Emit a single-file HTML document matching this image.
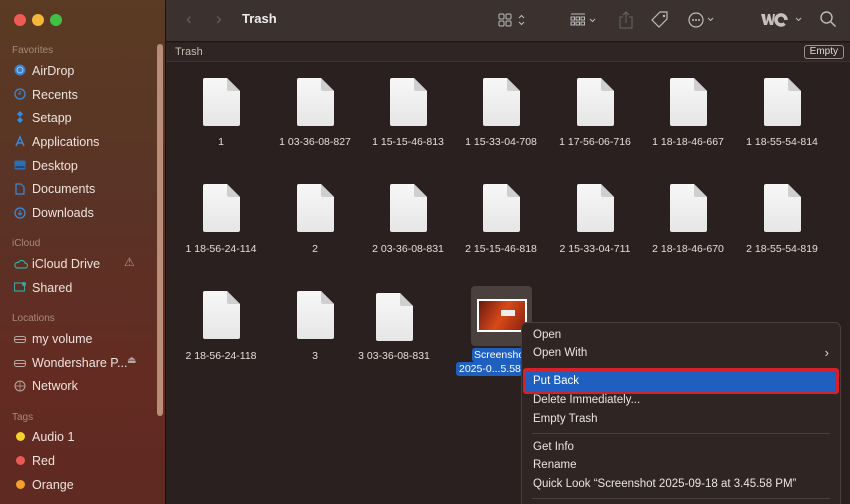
<!DOCTYPE html><html><head><style>
*{margin:0;padding:0;box-sizing:border-box}
html,body{width:850px;height:504px;overflow:hidden}
body{font-family:"Liberation Sans",sans-serif;background:#2a201f;position:relative}
.sb{position:absolute;left:0;top:0;width:166px;height:504px;background:linear-gradient(180deg,#5b3b24 0%,#5a3326 40%,#642b22 75%,#5e2a22 100%);border-right:1px solid #1a1210}
.dot{position:absolute;top:14px;width:12px;height:12px;border-radius:50%}
.sec{position:absolute;left:12px;font-size:10px;color:#a88a7a}
.it{position:absolute;left:32px;font-size:12.5px;color:#eee3dc}
.ic{position:absolute;left:14px;width:12px;height:12px}
.tb{position:absolute;left:166px;top:0;width:684px;height:42px;background:#3b3230;border-bottom:1px solid #1d1514}
.pb{position:absolute;left:166px;top:43px;width:684px;height:19px;background:#2e2524;border-bottom:1px solid #3c3230}
.f{position:absolute;width:37px;height:48px}
.lb{position:absolute;width:100px;text-align:center;font-size:10.5px;color:#e6dcd8}
.menu{position:absolute;left:521px;top:322px;width:320px;height:190px;background:#2f2624;border:1px solid #4a3f3c;border-radius:6px}
.mi{position:absolute;left:11px;font-size:11.5px;color:#ece4e0}
.sep{position:absolute;left:10px;right:10px;height:1px;background:#4a403d}
</style></head><body>
<svg width="0" height="0" style="position:absolute"><defs><linearGradient id="pg" x1="0" y1="0" x2="0" y2="1"><stop offset="0" stop-color="#f7f7f7"/><stop offset="1" stop-color="#e6e6e6"/></linearGradient><symbol id="doc" viewBox="0 0 37 48"><path d="M2 0h22l13 13v33a2 2 0 0 1-2 2H2a2 2 0 0 1-2-2V2a2 2 0 0 1 2-2z" fill="url(#pg)"/><path d="M24 0v11a2 2 0 0 0 2 2h11z" fill="#cfcfcf"/></symbol></defs></svg>
<div class="sb">
<div class="dot" style="left:14px;background:#ee5a55"></div>
<div class="dot" style="left:32px;background:#f3b73a"></div>
<div class="dot" style="left:50px;background:#3fc146"></div>
<div style="position:absolute;left:157px;top:44px;width:6px;height:372px;border-radius:3px;background:#b98d77"></div>
<div class="sec" style="top:45px">Favorites</div>
<svg class="ic" style="top:64px" viewBox="0 0 12 12"><circle cx="6" cy="6" r="5.5" fill="#3a7fc8"/><circle cx="6" cy="6" r="3" fill="none" stroke="#9cc8f0" stroke-width="1"/></svg><div class="it" style="top:64px">AirDrop</div>
<svg class="ic" style="top:88px" viewBox="0 0 12 12"><circle cx="6" cy="6" r="5" fill="none" stroke="#3a8ad8" stroke-width="1.3"/><path d="M6 3v3H4" stroke="#3a8ad8" fill="none"/></svg><div class="it" style="top:88px">Recents</div>
<svg class="ic" style="top:111px" viewBox="0 0 12 12"><path d="M6 0l3 3-3 3-3-3zM6 6l3 3-3 3-3-3z" fill="#2f8ee8"/></svg><div class="it" style="top:111px">Setapp</div>
<svg class="ic" style="top:135px" viewBox="0 0 12 12"><path d="M2 11L6 2l4 9M3 8h6" stroke="#3a8ad8" stroke-width="1.5" fill="none"/></svg><div class="it" style="top:135px">Applications</div>
<svg class="ic" style="top:159px" viewBox="0 0 12 12"><rect x="0.5" y="1.5" width="11" height="9" rx="1" fill="#2f6fb0"/><rect x="1.5" y="7" width="9" height="2" fill="#1d4a7a"/></svg><div class="it" style="top:159px">Desktop</div>
<svg class="ic" style="top:183px" viewBox="0 0 12 12"><path d="M2 1h5l3 3v7H2z" fill="none" stroke="#3a8ad8" stroke-width="1.2"/></svg><div class="it" style="top:182px">Documents</div>
<svg class="ic" style="top:207px" viewBox="0 0 12 12"><circle cx="6" cy="6" r="5" fill="none" stroke="#3a8ad8" stroke-width="1.3"/><path d="M6 3v5M4 6l2 2 2-2" stroke="#3a8ad8" fill="none"/></svg><div class="it" style="top:206px">Downloads</div>
<div class="sec" style="top:238px">iCloud</div>
<svg class="ic" style="top:258px;width:14px" viewBox="0 0 14 12"><path d="M3 10h8a2.5 2.5 0 0 0 0-5 3.5 3.5 0 0 0-6.5-.5A2.8 2.8 0 0 0 3 10z" fill="none" stroke="#3aa8a0" stroke-width="1.2"/></svg><div class="it" style="top:257px">iCloud Drive</div>
<div style="position:absolute;left:124px;top:255px;font-size:12px;color:#b0988a">⚠</div>
<svg class="ic" style="top:281px" viewBox="0 0 12 12"><rect x="0.5" y="2" width="10" height="8" fill="none" stroke="#3aa8a0" stroke-width="1.1"/><circle cx="10" cy="3" r="2" fill="#3aa8a0"/></svg><div class="it" style="top:281px">Shared</div>
<div class="sec" style="top:313px">Locations</div>
<svg class="ic" style="top:333px" viewBox="0 0 12 12"><rect x="0.5" y="3.5" width="11" height="6" rx="2" fill="none" stroke="#b8a8a0"/><path d="M1 6.5h10" stroke="#b8a8a0"/></svg><div class="it" style="top:332px">my volume</div>
<svg class="ic" style="top:357px" viewBox="0 0 12 12"><rect x="0.5" y="3.5" width="11" height="6" rx="2" fill="none" stroke="#b8a8a0"/><path d="M1 6.5h10" stroke="#b8a8a0"/></svg><div class="it" style="top:356px">Wondershare P...</div>
<div style="position:absolute;left:127px;top:355px;font-size:10px;color:#b8a8a0">⏏</div>
<svg class="ic" style="top:380px" viewBox="0 0 12 12"><circle cx="6" cy="6" r="5" fill="none" stroke="#b8a8a0"/><path d="M1 6h10M6 1v10" stroke="#b8a8a0" stroke-width=".7"/></svg><div class="it" style="top:379px">Network</div>
<div class="sec" style="top:412px">Tags</div>
<div class="dot" style="left:16px;top:432px;width:9px;height:9px;background:#f5d22c"></div><div class="it" style="top:430px">Audio 1</div>
<div class="dot" style="left:16px;top:456px;width:9px;height:9px;background:#ec5a55"></div><div class="it" style="top:454px">Red</div>
<div class="dot" style="left:16px;top:480px;width:9px;height:9px;background:#f5a12c"></div><div class="it" style="top:478px">Orange</div>
</div>
<div class="tb">
<div style="position:absolute;left:20px;top:9px;font-size:17px;color:#6a5e5a">‹</div>
<div style="position:absolute;left:50px;top:9px;font-size:17px;color:#6a5e5a">›</div>
<div style="position:absolute;left:76px;top:11px;font-size:13px;font-weight:bold;color:#eee">Trash</div>
<svg style="position:absolute;left:332px;top:12px" width="40" height="16" viewBox="0 0 40 16"><g fill="none" stroke="#bbb" stroke-width="1"><rect x="1" y="2" width="5" height="5" rx="1"/><rect x="8" y="2" width="5" height="5" rx="1"/><rect x="1" y="9" width="5" height="5" rx="1"/><rect x="8" y="9" width="5" height="5" rx="1"/><path d="M21 6l2.5-2.5L26 6M21 10l2.5 2.5L26 10"/></g></svg>
<svg style="position:absolute;left:404px;top:12px" width="40" height="16" viewBox="0 0 40 16"><g fill="none" stroke="#bbb" stroke-width="1"><path d="M1 2h14"/><rect x="1" y="5" width="3.5" height="3"/><rect x="6" y="5" width="3.5" height="3"/><rect x="11" y="5" width="3.5" height="3"/><rect x="1" y="10" width="3.5" height="3"/><rect x="6" y="10" width="3.5" height="3"/><rect x="11" y="10" width="3.5" height="3"/><path d="M20 7l2.5 2.5L25 7"/></g></svg>
<svg style="position:absolute;left:452px;top:10px" width="16" height="20" viewBox="0 0 16 20"><g fill="none" stroke="#666" stroke-width="1"><path d="M5 7H2v11h12V7h-3M8 13V2M5 5l3-3 3 3"/></g></svg>
<svg style="position:absolute;left:484px;top:10px" width="20" height="20" viewBox="0 0 20 20"><path d="M10 2h7v7l-8 8-7-7z" fill="none" stroke="#bbb" stroke-width="1.2"/><circle cx="14" cy="6" r="1.2" fill="#bbb"/></svg>
<svg style="position:absolute;left:520px;top:10px" width="40" height="20" viewBox="0 0 40 20"><circle cx="10" cy="10" r="7" fill="none" stroke="#bbb" stroke-width="1.2"/><circle cx="7" cy="10" r="1" fill="#bbb"/><circle cx="10" cy="10" r="1" fill="#bbb"/><circle cx="13" cy="10" r="1" fill="#bbb"/><path d="M22 8l2.5 2.5L27 8" fill="none" stroke="#bbb"/></svg>
<svg style="position:absolute;left:594px;top:10px" width="44" height="20" viewBox="0 0 44 20"><path d="M1 4h4l1 8 2-8h2l2 8 1-8h2l-2 11h-3l-1.5-5-1.5 5H4z" fill="#c8c0bc"/><path d="M26 10a5 5 0 1 0-1.5 3.5" fill="none" stroke="#c8c0bc" stroke-width="3.5"/><path d="M36 8l2.5 2.5L41 8" fill="none" stroke="#bbb"/></svg>
<svg style="position:absolute;left:653px;top:10px" width="18" height="18" viewBox="0 0 18 18"><circle cx="7.5" cy="7.5" r="5.5" fill="none" stroke="#bbb" stroke-width="1.4"/><path d="M11.5 11.5l5 5" stroke="#bbb" stroke-width="1.5"/></svg>
</div>
<div class="pb">
<div style="position:absolute;left:9px;top:3px;font-size:11px;color:#c8bcb6">Trash</div>
<div style="position:absolute;right:6px;top:2px;padding:0 5px;height:14px;border:1px solid #9a8e8a;border-radius:3px;font-size:10px;line-height:12px;color:#ddd">Empty</div>
</div>
<svg class="f" style="left:203px;top:78px"><use href="#doc"/></svg>
<svg class="f" style="left:297px;top:78px"><use href="#doc"/></svg>
<svg class="f" style="left:390px;top:78px"><use href="#doc"/></svg>
<svg class="f" style="left:483px;top:78px"><use href="#doc"/></svg>
<svg class="f" style="left:577px;top:78px"><use href="#doc"/></svg>
<svg class="f" style="left:670px;top:78px"><use href="#doc"/></svg>
<svg class="f" style="left:764px;top:78px"><use href="#doc"/></svg>
<div class="lb" style="left:171px;top:136px">1</div>
<div class="lb" style="left:265px;top:136px">1 03-36-08-827</div>
<div class="lb" style="left:358px;top:136px">1 15-15-46-813</div>
<div class="lb" style="left:451px;top:136px">1 15-33-04-708</div>
<div class="lb" style="left:545px;top:136px">1 17-56-06-716</div>
<div class="lb" style="left:638px;top:136px">1 18-18-46-667</div>
<div class="lb" style="left:732px;top:136px">1 18-55-54-814</div>
<svg class="f" style="left:203px;top:184px"><use href="#doc"/></svg>
<svg class="f" style="left:297px;top:184px"><use href="#doc"/></svg>
<svg class="f" style="left:390px;top:184px"><use href="#doc"/></svg>
<svg class="f" style="left:483px;top:184px"><use href="#doc"/></svg>
<svg class="f" style="left:577px;top:184px"><use href="#doc"/></svg>
<svg class="f" style="left:670px;top:184px"><use href="#doc"/></svg>
<svg class="f" style="left:764px;top:184px"><use href="#doc"/></svg>
<div class="lb" style="left:171px;top:243px">1 18-56-24-114</div>
<div class="lb" style="left:265px;top:243px">2</div>
<div class="lb" style="left:358px;top:243px">2 03-36-08-831</div>
<div class="lb" style="left:451px;top:243px">2 15-15-46-818</div>
<div class="lb" style="left:545px;top:243px">2 15-33-04-711</div>
<div class="lb" style="left:638px;top:243px">2 18-18-46-670</div>
<div class="lb" style="left:732px;top:243px">2 18-55-54-819</div>
<svg class="f" style="left:203px;top:291px"><use href="#doc"/></svg>
<svg class="f" style="left:297px;top:291px"><use href="#doc"/></svg>
<svg class="f" style="left:376px;top:293px"><use href="#doc"/></svg>
<div class="lb" style="left:171px;top:350px">2 18-56-24-118</div>
<div class="lb" style="left:265px;top:350px">3</div>
<div class="lb" style="left:344px;top:350px">3 03-36-08-831</div>
<div style="position:absolute;left:471px;top:286px;width:61px;height:60px;background:#4a403e;border-radius:4px"></div>
<div style="position:absolute;left:477px;top:299px;width:50px;height:33px;background:#fff;padding:2px"><div style="width:100%;height:100%;background:linear-gradient(120deg,#6a1a10,#d84a18 50%,#8a2010);position:relative"><div style="position:absolute;left:22px;top:9px;width:14px;height:6px;background:#eee"></div></div></div>
<div style="position:absolute;left:472px;top:348px;width:52px;height:14px;background:#1f5fc0;border-radius:3px;font-size:10.5px;color:#fff;padding-left:2px;line-height:14px;overflow:hidden;white-space:nowrap">Screensho</div>
<div style="position:absolute;left:456px;top:362px;width:66px;height:14px;background:#1f5fc0;border-radius:3px;font-size:10.5px;color:#fff;padding-left:3px;line-height:14px;overflow:hidden;white-space:nowrap">2025-0...5.58</div>
<div class="menu">
<div class="mi" style="top:6px">Open</div>
<div class="mi" style="top:24px">Open With</div>
<div style="position:absolute;right:11px;top:22px;font-size:13px;color:#ddd">›</div>
<div style="position:absolute;left:1px;top:45px;width:316px;height:26px;border:3px solid #d8202c;border-radius:3px;background:#1f5fbf"></div>
<div class="mi" style="top:52px;color:#fff">Put Back</div>
<div class="mi" style="top:71px">Delete Immediately...</div>
<div class="mi" style="top:90px">Empty Trash</div>
<div class="sep" style="top:110px"></div>
<div class="mi" style="top:118px">Get Info</div>
<div class="mi" style="top:136px">Rename</div>
<div class="mi" style="top:155px">Quick Look “Screenshot 2025-09-18 at 3.45.58 PM”</div>
<div class="sep" style="top:175px"></div>
</div>
</body></html>
